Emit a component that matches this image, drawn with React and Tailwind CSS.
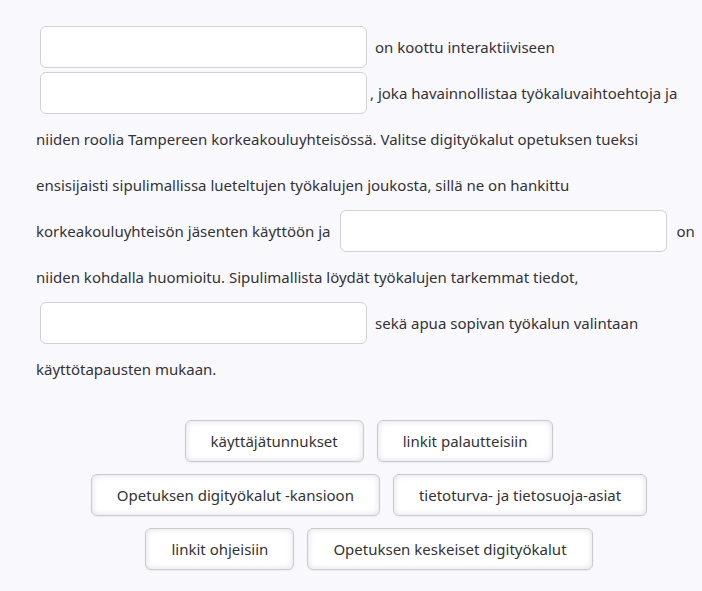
export default function App() {
    const blank = 'h-[42px] w-[327px] shrink-0 rounded-md border border-[#d1d1d6] bg-white';
    const line = 'flex h-[46px] items-center whitespace-nowrap';
    const buttons = [
        ['käyttäjätunnukset', 'linkit palautteisiin'],
        ['Opetuksen digityökalut -kansioon', 'tietoturva- ja tietosuoja-asiat'],
        ['linkit ohjeisiin', 'Opetuksen keskeiset digityökalut'],
    ];

    return (
        <div
            className="min-h-[591px] bg-[#f9f8fd] pl-[36px] pt-[24px] text-[15px] text-[#333333]"
            style={{ fontFamily: '"Noto Sans", "Open Sans", sans-serif' }}
        >
            {/* Cloze text */}
            <div>
                <div className={line}>
                    <span className={`${blank} ml-[4px]`} />
                    <span className="ml-[8px]">on koottu interaktiiviseen</span>
                </div>
                <div className={line}>
                    <span className={`${blank} ml-[4px]`} />
                    <span className="ml-[3px]">, joka havainnollistaa työkaluvaihtoehtoja ja</span>
                </div>
                <div className={line}>
                    niiden roolia Tampereen korkeakouluyhteisössä. Valitse digityökalut opetuksen tueksi
                </div>
                <div className={line}>
                    ensisijaisti sipulimallissa lueteltujen työkalujen joukosta, sillä ne on hankittu
                </div>
                <div className={line}>
                    <span>korkeakouluyhteisön jäsenten käyttöön ja</span>
                    <span className={`${blank} ml-[9px] w-[326px]`} />
                    <span className="ml-[10px]">on</span>
                </div>
                <div className={line}>
                    niiden kohdalla huomioitu. Sipulimallista löydät työkalujen tarkemmat tiedot,
                </div>
                <div className={line}>
                    <span className={`${blank} ml-[4px]`} />
                    <span className="ml-[8px]">sekä apua sopivan työkalun valintaan</span>
                </div>
                <div className={line}>käyttötapausten mukaan.</div>
            </div>

            {/* Answer options */}
            <div className="mt-[28px] flex flex-col items-center gap-[12px]">
                {buttons.map((row, i) => (
                    <div key={i} className="flex gap-[13px]">
                        {row.map((label) => (
                            <button
                                key={label}
                                className="h-[42px] rounded-md border border-[#c9c9cf] bg-white px-[25px] text-[#333333] shadow-[inset_0_0_6px_rgba(200,200,215,0.6),0_1px_2px_rgba(0,0,0,0.06)]"
                            >
                                {label}
                            </button>
                        ))}
                    </div>
                ))}
            </div>
        </div>
    );
}
